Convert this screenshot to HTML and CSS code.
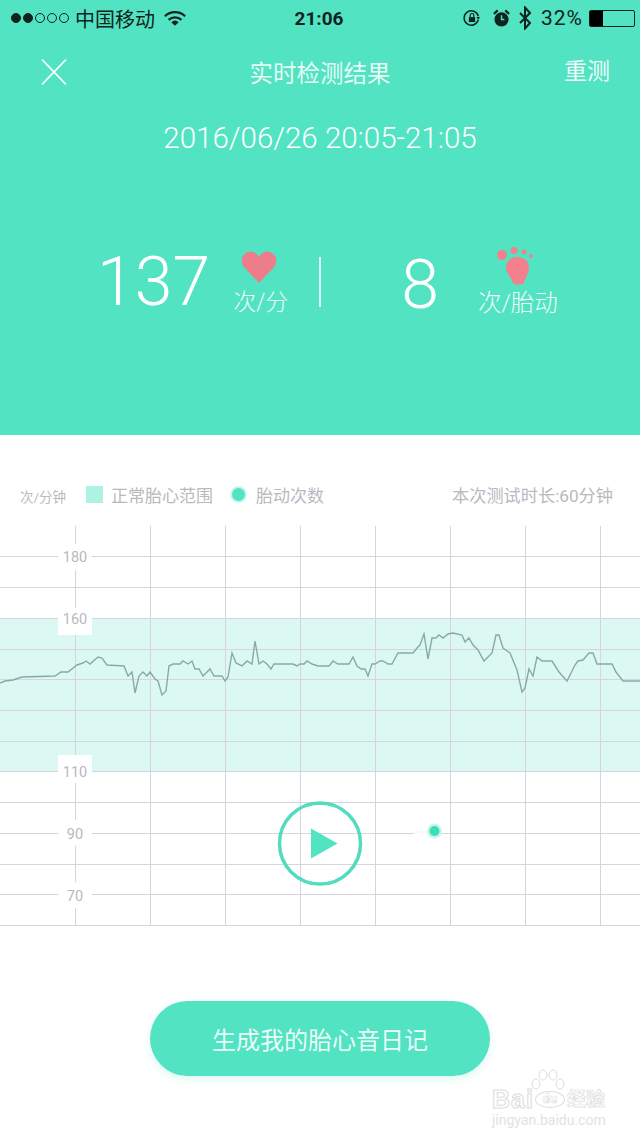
FILE: index.html
```html
<!DOCTYPE html>
<html lang="zh-CN">
<head>
<meta charset="UTF-8" />
<meta name="viewport" content="width=device-width, initial-scale=1" />
<title>实时检测结果</title>
<link rel="stylesheet" href="styles.css">
</head>
<body>
  <div class="page">
    <header class="top">
      <div class="status-bar">
        <div class="status-left">
          <span class="signal">
            <i class="on"></i><i class="on"></i><i></i><i></i><i></i>
          </span>
          <span class="carrier">中国移动</span>
          <svg class="wifi" width="22" height="17" viewBox="0 0 24 18">
            <path d="M1 6.500a16 16 0 0 1 22 0" fill="none" stroke="#10231f" stroke-width="2.400"/>
            <path d="M5 10.500a10.500 10.500 0 0 1 14 0" fill="none" stroke="#10231f" stroke-width="2.400"/>
            <path d="M12 17l-4-4a6 6 0 0 1 8 0z" fill="#10231f"/>
          </svg>
        </div>
        <span class="clock">21:06</span>
        <div class="status-right">
          <svg width="18" height="18" viewBox="0 0 20 20">
            <path d="M17 12a8 8 0 1 1 0-4" fill="none" stroke="#10231f" stroke-width="1.600"/>
            <path d="M15 9h4l-2 3z" fill="#10231f"/>
            <rect x="6.500" y="9" width="7" height="5.500" fill="#10231f"/>
            <path d="M8 9V7a2 2 0 0 1 4 0v2" fill="none" stroke="#10231f" stroke-width="1.300"/>
          </svg>
          <svg class="alarm" width="17" height="19" viewBox="0 0 18 20">
            <circle cx="9" cy="11" r="7.500" fill="#10231f"/>
            <path d="M1 5l4-3.500M17 5l-4-3.500" stroke="#10231f" stroke-width="2.400"/>
            <path d="M9 6.500V11h3" fill="none" stroke="#52e3c2" stroke-width="1.500"/>
          </svg>
          <svg class="bt" width="12" height="24" viewBox="0 0 12 24">
            <path d="M1 7l10 10-5 5.500V1.500l5 5.500L1 17" fill="none" stroke="#10231f" stroke-width="2"/>
          </svg>
          <span class="battery-pct">32%</span>
          <span class="battery"><span class="battery-fill"></span></span>
        </div>
      </div>

      <nav class="nav">
        <svg class="close" width="28" height="28" viewBox="0 0 28 28">
          <path d="M2 1.500L26 26.500M26 1.500L2 26.500" stroke="#fff" stroke-width="1.800"/>
        </svg>
        <h1 class="nav-title">实时检测结果</h1>
        <a class="retest">重测</a>
      </nav>

      <p class="date">2016/06/26 20:05-21:05</p>

      <div class="stats">
        <div class="stat stat-rate">
          <span class="stat-num">137</span>
          <div class="stat-side">
            <svg width="36" height="32" viewBox="0 0 38 34">
              <path d="M19 34L3.500 17.500C-1 12.500 0 4.500 6 1.500c5-2.300 10 0 13 4.500 3-4.500 8-6.800 13-4.500 6 3 7 11 2.500 16z" fill="#ee7d8b"/>
            </svg>
            <span class="stat-unit">次/分</span>
          </div>
        </div>
        <span class="stat-divider"></span>
        <div class="stat stat-move">
          <span class="stat-num">8</span>
          <div class="stat-side">
            <svg width="38" height="38" viewBox="0 0 38 38">
              <circle cx="5" cy="8" r="5" fill="#f47f8d"/>
              <circle cx="17" cy="3.500" r="3.500" fill="#f47f8d"/>
              <circle cx="27" cy="5" r="2.500" fill="#f47f8d"/>
              <circle cx="34" cy="9" r="2" fill="#f47f8d"/>
              <path d="M20 10c7 0 12 4 12 10 0 7-4 10-5 16-3 2-9 2-11 0-1-5-7-9-7-16 0-6 5-10 11-10z" fill="#f47f8d"/>
            </svg>
            <span class="stat-unit">次/胎动</span>
          </div>
        </div>
      </div>
    </header>

    <section class="report">
      <div class="legend">
        <span class="legend-unit">次/分钟</span>
        <span class="legend-swatch"></span>
        <span class="legend-label">正常胎心范围</span>
        <span class="legend-dot"></span>
        <span class="legend-label">胎动次数</span>
        <span class="legend-time">本次测试时长:60分钟</span>
      </div>

      <svg class="chart" width="640" height="402" viewBox="0 524 640 402">
        <rect class="band" x="0" y="618" width="640" height="153"/>
        <g class="grid">
          <path d="M0 556.500H640M0 587.500H640M0 618.500H640M0 649.500H640M0 679.500H640M0 710.500H640M0 741.500H640M0 771.500H640M0 802.500H640M0 833.500H640M0 864.500H640M0 894.500H640M0 925.500H640"/>
          <path d="M75.500 526V925M150.500 526V925M225.500 526V925M300.500 526V925M375.500 526V925M450.500 526V925M525.500 526V925M600.500 526V925"/>
        </g>
        <polyline class="trace" points="0,683 5,681 13,680 22,677 55,676 61,672 68,672 77,665 83,663 86,661 90,664 98,657 102,658 107,665 124,666 128,676 132,672 135,693 139,676 143,672 147,676 150,672 155,679 158,681 162,695 166,691 169,666 173,664 180,664 183,661 188,664 192,661 195,669 199,669 203,676 210,669 214,676 222,676 225,681 228,677 232,653 236,663 242,666 247,661 252,664 255,641 259,664 263,661 267,664 271,669 274,664 293,664 297,666 300,664 304,664 307,661 312,664 318,666 329,666 333,661 338,664 349,664 353,657 357,666 361,669 365,669 368,676 372,664 375,664 380,661 383,661 388,664 392,664 398,653 413,653 417,648 420,645 424,634 428,659 432,638 436,638 439,635 443,638 448,634 453,633 462,635 465,642 469,638 473,645 478,650 484,661 492,653 496,635 499,635 503,648 510,653 517,670 522,692 525,688 529,669 533,676 537,657 542,661 552,661 559,672 567,681 575,665 578,661 583,660 589,653 593,653 597,664 612,664 616,672 623,681 640,681"/>

        <rect class="tick-bg" x="58" y="544" width="34" height="26"/>
        <rect class="tick-bg" x="58" y="608" width="34" height="27"/>
        <rect class="tick-bg" x="58" y="755" width="34" height="28"/>
        <rect class="tick-bg" x="58" y="820" width="34" height="26"/>
        <rect class="tick-bg" x="58" y="882" width="34" height="26"/>
        <text class="tick" x="75" y="562">180</text>
        <text class="tick" x="75" y="624">160</text>
        <text class="tick" x="75" y="777">110</text>
        <text class="tick" x="75" y="839">90</text>
        <text class="tick" x="75" y="901">70</text>

        <path d="M414 832H430" stroke="#fff" stroke-width="4"/>
        <path d="M414 832H430" stroke="#f2f2f2" stroke-width="1"/>
        <circle class="move-glow" cx="434.500" cy="831" r="7.500"/>
        <circle class="move-dot" cx="434.500" cy="831" r="5"/>

        <circle class="play-ring" cx="320" cy="843.500" r="40.500"/>
        <path class="play-arrow" d="M311 828.500L337.500 843.500L311 858.500z"/>
      </svg>

      <div class="action">
        <button class="diary-btn">生成我的胎心音日记</button>
      </div>
    </section>

    <div class="watermark">
      <svg width="34" height="26" viewBox="0 0 34 26">
        <g fill="#fff" stroke="#dcdcdc" stroke-width="1">
          <ellipse cx="5" cy="15" rx="4" ry="5"/>
          <ellipse cx="12" cy="6" rx="4" ry="5"/>
          <ellipse cx="22" cy="6" rx="4" ry="5"/>
          <ellipse cx="29" cy="15" rx="4" ry="5"/>
        </g>
      </svg>
      <div class="wm-brand">
        <span class="wm-bai">Bai</span>
        <span class="wm-du">du</span>
        <span class="wm-jy">经验</span>
      </div>
      <span class="wm-url">jingyan.baidu.com</span>
    </div>
  </div>
</body>
</html>
```

FILE: styles.css
```css
:root {
  --green: #52e3c2;
  --ink: #10231f;
  --grey: #bbb8bf;
  --sans: Roboto, "Noto Sans CJK SC", sans-serif;
}
* {
  box-sizing: border-box;
}
body {
  margin: 0;
  background: #fff;
  font-family: var(--sans);
}
.page {
  position: relative;
  width: 640px;
  height: 1139px;
  overflow: hidden;
}
.top {
  height: 435px;
  background: var(--green);
  color: #fff;
}
.status-bar {
  display: flex;
  align-items: center;
  justify-content: space-between;
  height: 36px;
  padding: 0 5px 0 11px;
  color: var(--ink);
}
.status-left, .status-right {
  display: flex;
  align-items: center;
  flex: 1;
}
.status-right {
  justify-content: flex-end;
}
.signal {
  display: flex;
  gap: 2px;
}
.signal i {
  width: 10px;
  height: 10px;
  border-radius: 50%;
  border: 1px solid var(--ink);
}
.signal i.on {
  background: var(--ink);
}
.carrier {
  font-size: 20px;
  margin-left: 6px;
}
.wifi {
  margin-left: 9px;
}
.clock {
  margin-right: 8px;
  font-size: 19px;
  font-weight: 700;
}
.alarm {
  margin-left: 12px;
}
.bt {
  margin-left: 9px;
}
.battery-pct {
  font-size: 21px;
  letter-spacing: 1px;
  margin-left: 10px;
}
.battery {
  display: block;
  width: 46px;
  height: 17px;
  margin-left: 6px;
  border: 1px solid var(--ink);
  border-radius: 2px;
}
.battery-fill {
  display: block;
  width: 13px;
  height: 100%;
  background: #000;
}
.nav {
  display: flex;
  align-items: center;
  justify-content: space-between;
  padding: 19px 30px 0 40px;
}
.nav-title {
  margin: 0 0 0 8px;
  font-size: 23.500px;
  font-weight: 400;
  opacity: 0.85;
}
.retest {
  font-size: 23px;
  opacity: 0.9;
  line-height: 28px;
}
.date {
  margin: 31px 0 0;
  text-align: center;
  font-size: 29.500px;
  font-weight: 300;
  line-height: 36px;
}
.stats {
  display: flex;
  align-items: center;
  margin-top: 91px;
  padding-left: 97px;
}
.stat {
  display: flex;
  align-items: flex-end;
}
.stat-num {
  font-size: 68px;
  font-weight: 300;
  line-height: 64px;
}
.stat-side {
  display: flex;
  flex-direction: column;
  align-items: center;
  gap: 5px;
  margin-bottom: -4px;
}
.stat-unit {
  font-size: 23px;
  line-height: 30px;
  font-weight: 300;
  opacity: 0.9;
}
.stat-rate .stat-side {
  margin-left: 23px;
}
.stat-rate svg {
  margin-left: -4px;
}
.stat-divider {
  width: 2px;
  height: 50px;
  margin-left: 31px;
  background: rgb(255 255 255 / 0.85);
}
.stat-move {
  margin-left: 80px;
}
.stat-move .stat-side {
  margin-left: 39px;
  gap: 3px;
  margin-bottom: -1px;
}
.stat-move svg {
  margin-left: -4px;
}
.stat-move .stat-unit {
  font-size: 23.500px;
}
.report {
  padding-top: 45px;
}
.legend {
  display: flex;
  align-items: center;
  height: 28px;
  padding: 0 27px 0 20px;
  color: var(--grey);
  font-size: 17px;
}
.legend-unit {
  font-size: 13.500px;
  margin-top: 3px;
}
.legend-swatch {
  width: 17px;
  height: 17px;
  margin: 0 8px 0 20px;
  background: #aef2e2;
}
.legend-dot {
  width: 13px;
  height: 13px;
  margin: 0 11px 0 19px;
  border-radius: 50%;
  background: var(--green);
  box-shadow: 0 0 0 2px #c9f6ea;
}
.legend-time {
  margin-left: auto;
  font-size: 17.200px;
}
.chart {
  display: block;
  margin-top: 16px;
}
.band {
  fill: #dcf8f3;
}
.grid path {
  fill: none;
  stroke: #d8d4dd;
  stroke-width: 1;
}
.trace {
  fill: none;
  stroke: #86aba5;
  stroke-width: 1.400;
}
.tick-bg {
  fill: #fff;
}
.tick {
  fill: var(--grey);
  font-size: 14.500px;
  text-anchor: middle;
}
.move-glow {
  fill: #c6f5e9;
}
.move-dot {
  fill: #3fdcb8;
}
.play-ring {
  fill: #fff;
  fill-opacity: 0;
  stroke: #52dcc0;
  stroke-width: 3.500;
}
.play-arrow {
  fill: var(--green);
}
.action {
  display: flex;
  justify-content: center;
  margin-top: 75px;
}
.diary-btn {
  width: 340px;
  height: 75px;
  border: none;
  border-radius: 38px;
  background: var(--green);
  color: rgb(255 255 255 / 0.9);
  font-family: inherit;
  font-size: 24px;
  box-shadow: 0 3px 8px rgb(82 227 194 / 0.2);
}
.watermark {
  position: absolute;
  left: 492px;
  top: 1069px;
  width: 116px;
  line-height: 1;
}
.watermark svg {
  display: block;
  margin-left: 39px;
}
.wm-brand {
  display: flex;
  align-items: center;
  height: 22px;
  margin-top: -7px;
  color: #fff;
  -webkit-text-stroke: 1px #dcdcdc;
}
.wm-bai {
  font-family: "Liberation Sans", sans-serif;
  font-size: 25px;
  font-weight: 700;
  letter-spacing: 1px;
}
.wm-du {
  width: 30px;
  height: 17px;
  margin-left: 1px;
  border: 1px solid #dcdcdc;
  border-radius: 50%;
  background: #fff;
  font-size: 13px;
  font-weight: 700;
  text-align: center;
  -webkit-text-stroke: 0.5px #dcdcdc;
}
.wm-jy {
  margin-left: 2px;
  font-size: 19px;
  font-weight: 700;
  -webkit-text-stroke: 0.7px #dcdcdc;
}
.wm-url {
  display: block;
  margin-top: 3px;
  color: #e2e2e2;
  font-size: 14px;
  white-space: nowrap;
}
```
